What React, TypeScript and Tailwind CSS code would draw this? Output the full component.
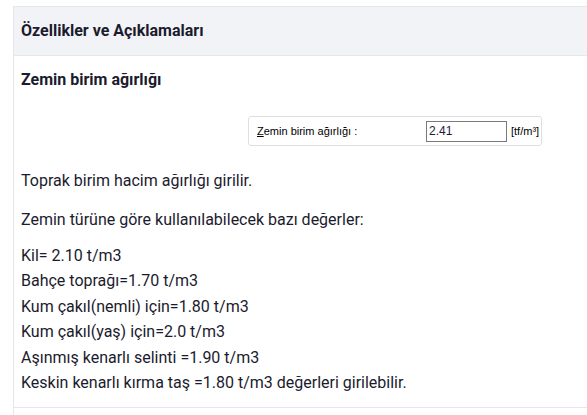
export default function App() {
  const lines = [
    "Kil= 2.10 t/m3",
    "Bahçe toprağı=1.70 t/m3",
    "Kum çakıl(nemli) için=1.80 t/m3",
    "Kum çakıl(yaş) için=2.0 t/m3",
    "Aşınmış kenarlı selinti =1.90 t/m3",
    "Keskin kenarlı kırma taş =1.80 t/m3 değerleri girilebilir.",
  ];
  return (
    <div className="w-[587px] h-[415px] overflow-hidden bg-white pt-[6px] pl-[13px]" style={{ fontFamily: "Roboto, sans-serif" }}>
      <div className="w-[600px] border-l border-t border-[#e6e7ec] min-h-[420px]">
        <div className="h-[49px] bg-[#f2f3f7] border-b border-[#e6e7ec] flex items-center pl-[7px] pb-[1px]">
          <span className="text-[16px] font-bold text-[#1b1b2e]">Özellikler ve Açıklamaları</span>
        </div>
        <div className="pl-[7px] text-[#1b1b2e]">
          <div className="pt-[13px] text-[16px] font-bold leading-[22px]">Zemin birim ağırlığı</div>
          <div className="mt-[25px] ml-[227px] w-[294px] h-[30px] border border-[#dedfe3] rounded-[3px] flex items-center text-[11px] text-black" style={{ fontFamily: "'Liberation Sans', Arial, sans-serif" }}>
            <span className="ml-[8px] w-[169px]"><span className="underline">Z</span>emin birim ağırlığı :</span>
            <span className="w-[81px] h-[21px] border border-[#7a7a7a] flex items-center pl-[2px] text-[#1a1a40] text-[12px]">2.41</span>
            <span className="ml-[4px]">[tf/m³]</span>
          </div>
          <p className="mt-[22px] text-[16px] leading-[25px]">Toprak birim hacim ağırlığı girilir.</p>
          <p className="mt-[14px] text-[16px] leading-[25px]">Zemin türüne göre kullanılabilecek bazı değerler:</p>
          <div className="mt-[11px] text-[16px] leading-[25.4px]">
            {lines.map((l) => (
              <div key={l}>{l}</div>
            ))}
          </div>
          <div className="mt-[12px] border-t border-[#e6e7ec] -ml-[7px]"></div>
        </div>
      </div>
    </div>
  );
}
